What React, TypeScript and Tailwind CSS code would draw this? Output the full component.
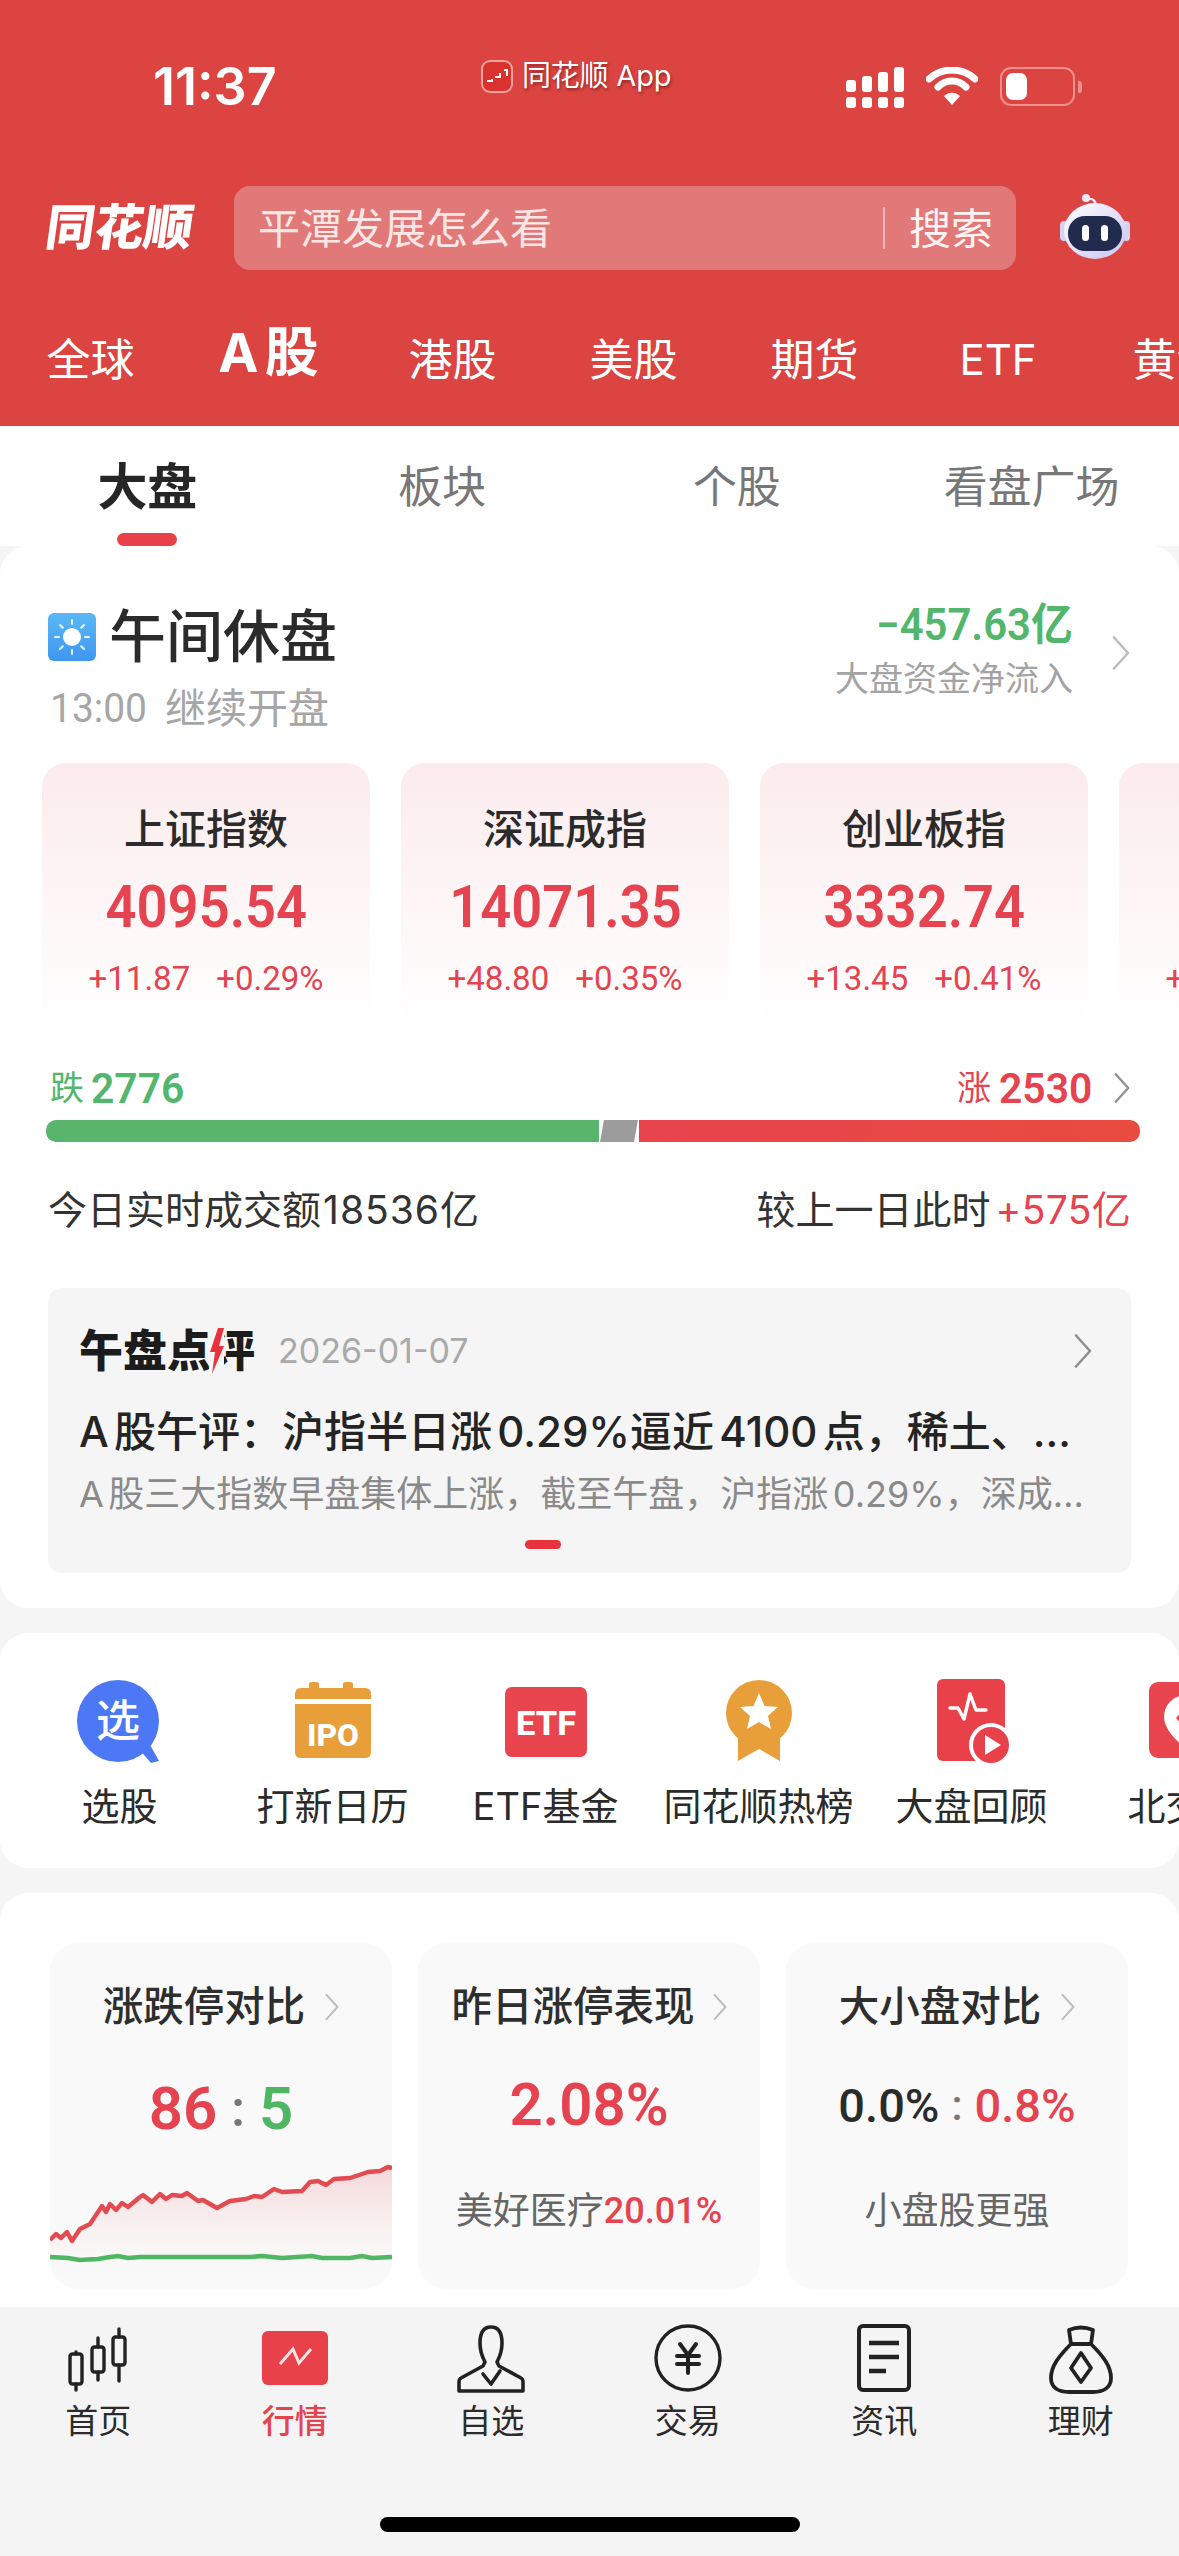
import React from "react";

function Chevron({ className = "", color = "#BDBDBD" }: { className?: string; color?: string }) {
  return (
    <svg viewBox="0 0 18 34" className={className} fill="none">
      <path d="M2 1.5 L16 17 L2 32.5" stroke={color} strokeWidth="2.6" strokeLinejoin="round" strokeLinecap="round" />
    </svg>
  );
}

function Signal() {
  const h = [12, 16, 20, 25];
  return (
    <svg width="60" height="42" viewBox="0 0 60 42" fill="#fff">
      {h.map((v, i) => (
        <g key={i}>
          <rect x={i * 16} y={25 - v} width="10" height={v} rx="3" />
          <rect x={i * 16} y="30" width="10" height="11" rx="3" />
        </g>
      ))}
    </svg>
  );
}

function Wifi() {
  return (
    <svg width="52" height="40" viewBox="0 0 52 40" fill="none">
      <path d="M3 11 C16 -1 36 -1 49 11" stroke="#fff" strokeWidth="7" strokeLinecap="round" transform="translate(0 1)" />
      <path d="M12 20 C20 12 32 12 40 20" stroke="#fff" strokeWidth="7" strokeLinecap="round" />
      <path d="M18 29 C23 24.5 29 24.5 34 29 L26 38 Z" fill="#fff" />
    </svg>
  );
}

function Battery() {
  return (
    <div className="flex items-center gap-[3px]">
      <div className="w-[75px] h-[39px] rounded-[11px] border-[2.5px] border-[#F08F8C] p-[4px]">
        <div className="w-[21px] h-full rounded-[7px] bg-white" />
      </div>
      <div className="w-[4px] h-[12px] rounded-r-[3px] bg-[#F08F8C]" />
    </div>
  );
}

function Robot() {
  return (
    <svg width="72" height="66" viewBox="0 0 72 66">
      <defs>
        <linearGradient id="rb" x1="0" y1="0" x2="1" y2="1">
          <stop offset="0" stopColor="#FFFFFF" />
          <stop offset="1" stopColor="#C9C3F2" />
        </linearGradient>
      </defs>
      <circle cx="27" cy="5" r="4" fill="#EDE9FA" />
      <path d="M29 6 C35 5 37 9 37 14" stroke="#EDE9FA" strokeWidth="2.4" fill="none" />
      <rect x="1" y="28" width="8" height="20" rx="4" fill="#D6D2F2" />
      <rect x="63" y="28" width="8" height="20" rx="4" fill="#D6D2F2" />
      <ellipse cx="36" cy="38" rx="31" ry="28" fill="url(#rb)" />
      <rect x="9" y="23" width="54" height="35" rx="17" fill="#202B4D" />
      <rect x="23" y="32" width="7" height="16" rx="3.5" fill="#fff" />
      <rect x="42" y="32" width="7" height="16" rx="3.5" fill="#fff" />
    </svg>
  );
}

function Sun() {
  const rays = [0, 45, 90, 135, 180, 225, 270, 315];
  return (
    <svg width="48" height="48" viewBox="0 0 48 48">
      <defs>
        <linearGradient id="sky" x1="0" y1="0" x2="0" y2="1">
          <stop offset="0" stopColor="#5BB8F5" />
          <stop offset="1" stopColor="#3F96F0" />
        </linearGradient>
      </defs>
      <rect width="48" height="48" rx="6" fill="url(#sky)" />
      <circle cx="24" cy="24" r="9" fill="#fff" />
      {rays.map((r) => (
        <rect key={r} x="23" y="6" width="2" height="6" rx="1" fill="#E6F4FF" transform={`rotate(${r} 24 24)`} />
      ))}
    </svg>
  );
}

function IconXuan() {
  return (
    <svg width="90" height="90" viewBox="0 0 90 90">
      <path d="M64 72 L76 86 L84 84 L74 66 Z" fill="#4D78F5" />
      <circle cx="43" cy="44" r="41" fill="#4D78F5" />
      <text x="43" y="60" textAnchor="middle" fontSize="44" fontWeight="500" fill="#fff" fontFamily="Noto Sans CJK SC">选</text>
    </svg>
  );
}

function IconIpo() {
  return (
    <svg width="90" height="90" viewBox="0 0 90 90">
      <path d="M7 17 Q7 11 13 11 H21 V7 Q21 5 24 5 H28 Q31 5 31 7 V11 H55 V7 Q55 5 58 5 H62 Q65 5 65 7 V11 H77 Q83 11 83 17 V22 H7 Z" fill="#E89F3A" />
      <path d="M7 27 H83 V75 Q83 81 77 81 H13 Q7 81 7 75 Z" fill="#E89F3A" />
      <text x="45" y="69" textAnchor="middle" fontSize="32" fontWeight="800" fill="#fff" fontFamily="Roboto" textLength="52" lengthAdjust="spacingAndGlyphs">IPO</text>
    </svg>
  );
}

function IconEtf() {
  return (
    <svg width="90" height="90" viewBox="0 0 90 90">
      <rect x="4" y="10" width="82" height="70" rx="7" fill="#E8454F" />
      <text x="45" y="58" textAnchor="middle" fontSize="33" fontWeight="800" fill="#fff" fontFamily="Roboto" textLength="60" lengthAdjust="spacingAndGlyphs">ETF</text>
    </svg>
  );
}

function IconMedal() {
  return (
    <svg width="90" height="90" viewBox="0 0 90 90">
      <path d="M24 52 V84 L45 72 L66 84 V52 Z" fill="#E89F3A" />
      <circle cx="45" cy="36" r="33" fill="#E89F3A" />
      <path d="M45 16 L50.5 29 L64 30 L54 39 L57 52 L45 45 L33 52 L36 39 L26 30 L39.5 29 Z" fill="#fff" />
    </svg>
  );
}

function IconReview() {
  return (
    <svg width="90" height="90" viewBox="0 0 90 90">
      <rect x="10" y="2" width="68" height="82" rx="6" fill="#E8414A" />
      <path d="M23 31 H31 L37 42 L43 17 L49 33 H59" fill="none" stroke="#fff" strokeWidth="3.4" strokeLinejoin="round" strokeLinecap="round" />
      <circle cx="64" cy="68" r="22" fill="#fff" />
      <circle cx="64" cy="68" r="18" fill="#E8414A" />
      <path d="M58 58 L74 68 L58 78 Z" fill="#fff" />
    </svg>
  );
}

function IconBei() {
  return (
    <svg width="90" height="90" viewBox="0 0 90 90">
      <rect x="9" y="5" width="76" height="76" rx="9" fill="#E8454F" />
      <path d="M47 18 C61 18 70 28 70 40 C70 52 57 65 47 72 C37 65 24 52 24 40 C24 28 33 18 47 18 Z" fill="#fff" />
      <path d="M47 28 L58 41 L47 54 L36 41 Z" fill="#E8454F" />
    </svg>
  );
}

const navStroke = "#222222";

function NavHome() {
  return (
    <svg width="72" height="72" viewBox="0 0 72 72" fill="none" stroke={navStroke} strokeWidth="3.4">
      <path d="M14 30 V32 M14 62 V68 M36 16 V25 M36 50 V58 M57 7 V15 M57 43 V59" strokeLinecap="round" />
      <rect x="8" y="32" width="12" height="30" rx="2.5" />
      <rect x="30" y="25" width="12" height="25" rx="2.5" />
      <rect x="51" y="15" width="12" height="28" rx="2.5" />
    </svg>
  );
}

function NavMarket() {
  return (
    <svg width="72" height="72" viewBox="0 0 72 72">
      <rect x="3" y="9" width="66" height="54" rx="6" fill="#E8414A" />
      <path d="M21 42 L34 27 L40 41 L52 27" fill="none" stroke="#FBE3E4" strokeWidth="3" />
    </svg>
  );
}

function NavStock() {
  return (
    <svg width="72" height="72" viewBox="0 0 72 72" fill="none" stroke={navStroke} strokeWidth="3.6" strokeLinejoin="round">
      <path d="M36 5 C28 5 25 12 25 21 C25 31 28 36 30 40 L28 44 L6 56 Q4 57 4 60 V69 H68 V60 Q68 57 66 56 L44 44 L42 40 C44 36 47 31 47 21 C47 12 44 5 36 5 Z" />
      <path d="M28 52 L36 62 L45 49" strokeLinecap="round" />
    </svg>
  );
}

function NavTrade() {
  return (
    <svg width="72" height="72" viewBox="0 0 72 72" fill="none" stroke={navStroke} strokeWidth="3.4">
      <circle cx="36" cy="36" r="32" />
      <path d="M28 22 L36 33 L44 22 M25 34 H47 M25 42 H47 M36 33 V51" strokeLinecap="round" strokeWidth="4" />
    </svg>
  );
}

function NavNews() {
  return (
    <svg width="72" height="72" viewBox="0 0 72 72" fill="none" stroke={navStroke}>
      <rect x="11" y="4" width="50" height="64" rx="4" strokeWidth="4" />
      <path d="M21 21 H51 M21 35 H51 M21 49 H38" strokeWidth="4.4" />
    </svg>
  );
}

function NavMoney() {
  return (
    <svg width="72" height="72" viewBox="0 0 72 72" fill="none" stroke={navStroke} strokeWidth="3.8" strokeLinejoin="round">
      <path d="M24 8 Q36 3 48 8 L46 22 H26 Z" />
      <path d="M26 22 C14 34 6 44 6 56 C6 66 14 70 24 70 H48 C58 70 66 66 66 56 C66 44 58 34 46 22" />
      <path d="M36 31 L46 46 L36 60 L26 46 Z" />
    </svg>
  );
}

function Trend() {
  const raw: [number, number][] = [
    [0, 64], [6, 58], [11, 62], [17, 56], [22, 65], [30, 53], [40, 48], [52, 30], [56, 36], [60, 28], [66, 34], [72, 27], [78, 31], [90, 21], [93, 19], [102, 26], [110, 18], [116, 23], [122, 19], [132, 20], [137, 17], [148, 25], [153, 24], [160, 28], [167, 32], [180, 25], [196, 23], [204, 20], [212, 21], [224, 13], [232, 16], [252, 15], [260, 6], [268, 5], [276, 9], [284, 3], [300, 2], [318, -4], [330, -5], [338, -9], [342, -8],
  ];
  const line = raw.map(([x, y]) => `${x},${y + 12}`).join(" ");
  const green: [number, number][] = [[0, 93], [18, 94], [30, 96], [48, 95], [60, 93], [68, 92], [78, 94], [90, 93], [200, 93], [212, 92], [232, 94], [262, 92], [272, 94], [300, 94], [312, 92], [322, 94], [342, 93]];
  return (
    <svg width="342" height="125" viewBox="0 0 342 125" fill="none">
      <defs>
        <linearGradient id="tr" x1="0" y1="0" x2="0" y2="1">
          <stop offset="0" stopColor="#F5D6D8" />
          <stop offset="1" stopColor="#F9F9F9" stopOpacity="0" />
        </linearGradient>
      </defs>
      <polygon points={`0,125 ${line} 342,125`} fill="url(#tr)" />
      <polyline points={line} stroke="#E24B50" strokeWidth="4.4" strokeLinejoin="round" />
      <polyline points={green.map(([x, y]) => `${x},${y}`).join(" ")} stroke="#4FB663" strokeWidth="4.6" />
    </svg>
  );
}

const indices = [
  { n: "上证指数", v: "4095.54", a: "+11.87", p: "+0.29%" },
  { n: "深证成指", v: "14071.35", a: "+48.80", p: "+0.35%" },
  { n: "创业板指", v: "3332.74", a: "+13.45", p: "+0.41%" },
  { n: "科创50", v: "1424.31", a: "+12.30", p: "+0.87%" },
];

const shortcuts: [string, React.ReactNode][] = [
  ["选股", <IconXuan />],
  ["打新日历", <IconIpo />],
  ["ETF基金", <IconEtf />],
  ["同花顺热榜", <IconMedal />],
  ["大盘回顾", <IconReview />],
  ["北交所", <IconBei />],
];

const nav: [string, React.ReactNode, boolean][] = [
  ["首页", <NavHome />, false],
  ["行情", <NavMarket />, true],
  ["自选", <NavStock />, false],
  ["交易", <NavTrade />, false],
  ["资讯", <NavNews />, false],
  ["理财", <NavMoney />, false],
];

export default function App() {
  return (
    <div className="w-[1179px] h-[2556px] overflow-hidden flex flex-col bg-[#F5F5F5] font-['Inter','Noto_Sans_CJK_SC',sans-serif] text-[#2B2B2B]">
      {/* Red header */}
      <header className="h-[426px] shrink-0 bg-[#DC4441] text-white flex flex-col overflow-hidden">
        <div className="h-[186px] shrink-0 flex items-start">
          <div className="ml-[153px] w-[328px] mt-[56px] text-[52px] leading-[62px] font-semibold">11:37</div>
          <div className="w-[365px] mt-[57px] flex items-center gap-[9px]">
            <svg width="32" height="33" viewBox="0 0 32 33">
              <rect x="1" y="1" width="30" height="31" rx="8" fill="#D9322F" stroke="#F2A19E" strokeWidth="2" />
              <path d="M6 21 H10 M11 19 V22 M14 17 H18 M19 13 V18 M23 10 H26 V16" stroke="#fff" strokeWidth="2" fill="none" />
            </svg>
            <span className="text-[29px] leading-[38px] tracking-[-0.2px] [text-shadow:1px_2px_3px_rgba(90,20,20,0.6)]">同花顺 App</span>
          </div>
          <div className="mt-[67px] flex items-start">
            <Signal />
            <div className="ml-[20px]"><Wifi /></div>
            <div className="ml-[22px]"><Battery /></div>
          </div>
        </div>
        <div className="h-[84px] shrink-0 flex items-center">
          <div className="ml-[42px] w-[192px] text-[49px] leading-[60px] font-black -skew-x-[8deg] origin-bottom-left whitespace-nowrap">同花顺</div>
          <div className="w-[782px] h-[84px] rounded-[16px] bg-[#E27979] flex items-center pl-[24px]">
            <span className="w-[625px] pt-[2px] text-[42px] leading-[52px] text-[#FBE6E6]">平潭发展怎么看</span>
            <span className="w-[2px] h-[42px] bg-[#F0B5B5]" />
            <span className="ml-[24px] pt-[2px] text-[42px] leading-[52px] text-[#FFF4F4]">搜索</span>
          </div>
          <div className="ml-[43px] mb-[4px]"><Robot /></div>
        </div>
        <div className="mt-[60px] flex items-center h-[60px]">
          {["全球", "A股", "港股", "美股", "期货", "ETF", "黄金"].map((t) => (
            <div
              key={t}
              className={
                t === "A股"
                  ? "w-[181px] shrink-0 text-center text-[54px] leading-[60px] font-bold pb-[14px] tracking-[6px]"
                  : t === "ETF"
                    ? "w-[181px] shrink-0 text-center text-[42px] leading-[56px] pl-[5px]"
                    : "w-[181px] shrink-0 text-center text-[44px] leading-[56px]"
              }
            >
              {t}
            </div>
          ))}
        </div>
      </header>

      {/* Sub tabs */}
      <nav className="h-[120px] shrink-0 bg-white grid grid-cols-4">
        {["大盘", "板块", "个股", "看盘广场"].map((t, i) => (
          <div key={t} className="flex flex-col items-center pt-[32px]">
            <span className={i === 0 ? "text-[50px] leading-[58px] font-bold text-[#262626]" : "text-[44px] leading-[58px] text-[#777777]"}>{t}</span>
            {i === 0 && <span className="mt-[17px] w-[60px] h-[13px] rounded-full bg-[#E8414A]" />}
          </div>
        ))}
      </nav>

      {/* Market card */}
      <section className="shrink-0 bg-white rounded-[28px] pb-[35px]">
        <div className="flex pt-[54px] pl-[48px] items-start">
          <div className="w-[787px]">
            <div className="pt-[7px] flex items-center h-[67px]">
              <Sun />
              <span className="ml-[13px] text-[57px] leading-[60px] font-medium">午间休盘</span>
            </div>
            <div className="mt-[17px] pl-[2px] flex items-center h-[48px] text-[#A6A6A6] text-[41px] leading-[48px]">
              <span className="inline-block w-[115px] scale-x-95 origin-left font-['Roboto','Noto_Sans_CJK_SC',sans-serif]">13:00</span>
              <span>继续开盘</span>
            </div>
          </div>
          <div className="w-[238px] flex flex-col items-end">
            <span className="inline-block mt-[1px] scale-x-95 origin-right text-[44px] leading-[48px] font-semibold text-[#52B76D] font-['Roboto','Noto_Sans_CJK_SC',sans-serif] whitespace-nowrap">−457.63亿</span>
            <span className="mt-[8px] text-[34px] leading-[44px] text-[#A3A3A3] whitespace-nowrap">大盘资金净流入</span>
          </div>
          <Chevron className="ml-[39px] mt-[36px] w-[18px] h-[34px]" />
        </div>

        <div className="mt-[31px] flex gap-[31px] pl-[42px] overflow-hidden">
          {indices.map((c) => (
            <div key={c.n} className="w-[328px] h-[265px] shrink-0 rounded-[24px] bg-gradient-to-b from-[#FBEBED] to-[#FFFFFF] flex flex-col items-center">
              <span className="mt-[42px] text-[41px] leading-[48px] font-medium text-[#2B2B2B]">{c.n}</span>
              <span className="inline-block mt-[22px] scale-x-[0.905] text-[60px] leading-[64px] font-semibold text-[#E5434F] font-['Roboto',sans-serif] whitespace-nowrap">{c.v}</span>
              <div className="mt-[18px] flex gap-[26px] text-[33px] leading-[44px] text-[#E5434F] font-['Roboto',sans-serif]">
                <span>{c.a}</span>
                <span>{c.p}</span>
              </div>
            </div>
          ))}
        </div>

        <div className="mt-[38px] h-[44px] flex items-center pl-[50px] pr-[49px]">
          <span className="text-[34px] leading-[44px] text-[#52B76D]">跌</span>
          <span className="inline-block ml-[7px] w-[96px] scale-x-95 origin-left text-[43px] leading-[44px] font-semibold text-[#52B76D] font-['Roboto',sans-serif]">2776</span>
          <span className="ml-auto text-[34px] leading-[44px] text-[#E5434F]">涨</span>
          <span className="inline-block ml-[8px] w-[93px] scale-x-95 origin-left text-[43px] leading-[44px] font-semibold text-[#E5434F] font-['Roboto',sans-serif]">2530</span>
          <Chevron className="ml-[22px] w-[16px] h-[32px]" color="#8F8F8F" />
        </div>

        <div className="mt-[10px] ml-[46px] w-[1094px] h-[22px] flex">
          <div className="w-[553px] h-full rounded-l-[10px] bg-[#58B56B]" />
          <div className="ml-[3px] w-[34px] h-full bg-[#9C9C9C] -skew-x-[10deg]" />
          <div className="ml-[3px] flex-1 h-full rounded-r-[10px] bg-gradient-to-r from-[#E8444F] to-[#E84B3F]" />
        </div>

        <div className="mt-[44px] h-[48px] flex items-center justify-between pl-[48px] pr-[48px] text-[39px] leading-[48px] text-[#333333] whitespace-nowrap">
          <span>今日实时成交额<span className="ml-[2px] tracking-[1px]">18536亿</span></span>
          <span>较上一日此时<span className="ml-[5px] tracking-[0.3px] text-[#E5434F]">+575亿</span></span>
        </div>

        <div className="mt-[54px] mx-[48px] h-[285px] rounded-[14px] bg-[#F5F5F5] flex flex-col pl-[31px] pr-[38px] overflow-hidden">
          <div className="mt-[36px] h-[54px] flex items-center">
            <div className="relative w-[176px] text-[44px] leading-[54px] font-black text-[#1C1C1C] whitespace-nowrap">
              午盘点评
              <svg className="absolute left-[130px] top-[4px]" width="17" height="46" viewBox="0 0 17 46">
                <rect x="0" y="0" width="15" height="46" fill="#F5F5F5" />
                <path d="M9 0 H15 L10 18 H15 L3 46 L6 24 H1 Z" fill="#E8333C" />
              </svg>
            </div>
            <span className="ml-[23px] text-[34px] leading-[44px] text-[#A9A9A9]">2026-01-07</span>
            <Chevron className="ml-auto w-[20px] h-[34px]" color="#8F8F8F" />
          </div>
          <div className="mt-[26px] h-[56px] text-[42px] leading-[56px] font-medium text-[#242424] whitespace-nowrap [text-autospace:normal]">A股午评：沪指半日涨0.29%逼近4100点，稀土、…</div>
          <div className="mt-[10px] h-[48px] text-[36px] leading-[48px] text-[#8A8A8A] whitespace-nowrap [text-autospace:normal]">A股三大指数早盘集体上涨，截至午盘，沪指涨0.29%，深成…</div>
          <div className="mt-[22px] ml-[446px] w-[36px] h-[9px] rounded-full bg-[#E8333C]" />
        </div>
      </section>

      {/* Shortcuts */}
      <section className="mt-[25px] h-[235px] shrink-0 bg-white rounded-[28px] flex pl-[13px] overflow-hidden pt-[44px]">
        {shortcuts.map(([label, icon]) => (
          <div key={label} className="w-[213px] shrink-0 flex flex-col items-center">
            <div className="h-[90px]">{icon}</div>
            <span className="mt-[15px] text-[38px] leading-[48px] text-[#2B2B2B] whitespace-nowrap">{label}</span>
          </div>
        ))}
      </section>

      {/* Stats */}
      <section className="mt-[25px] flex-1 min-h-0 bg-white rounded-t-[28px] pt-[50px] pl-[50px] pr-[51px] flex gap-[26px]">
        <div className="w-[342px] h-[346px] shrink-0 rounded-[28px] bg-[#F9F9F9] flex flex-col items-center overflow-hidden">
          <div className="mt-[40px] h-[48px] flex items-center">
            <span className="text-[40.5px] leading-[48px] font-medium text-[#2E2E2E]">涨跌停对比</span>
            <Chevron className="ml-[20px] w-[14px] h-[28px]" />
          </div>
          <div className="mt-[42px] h-[72px] flex items-center text-[60px] leading-[72px] font-semibold font-['Roboto',sans-serif]">
            <span className="text-[#E5434F]">86</span>
            <span className="mx-[14px] text-[#777777] text-[50px]">:</span>
            <span className="text-[#4FB663]">5</span>
          </div>
          <div className="mt-auto"><Trend /></div>
        </div>

        <div className="w-[342px] h-[346px] shrink-0 rounded-[28px] bg-[#F9F9F9] flex flex-col items-center">
          <div className="mt-[40px] h-[48px] flex items-center">
            <span className="text-[40.5px] leading-[48px] font-medium text-[#2E2E2E]">昨日涨停表现</span>
            <Chevron className="ml-[18px] w-[14px] h-[28px]" />
          </div>
          <span className="inline-block mt-[38px] h-[72px] scale-x-[0.97] text-[60px] leading-[72px] font-semibold text-[#E5434F] font-['Roboto',sans-serif]">2.08%</span>
          <div className="mt-[46px] h-[48px] flex items-center whitespace-nowrap text-[37px] leading-[48px] text-[#666666]">
            美好医疗<span className="text-[#E5434F] text-[36px] font-['Roboto',sans-serif] font-medium">20.01%</span>
          </div>
        </div>

        <div className="w-[342px] h-[346px] shrink-0 rounded-[28px] bg-[#F9F9F9] flex flex-col items-center">
          <div className="mt-[40px] h-[48px] flex items-center">
            <span className="text-[40.5px] leading-[48px] font-medium text-[#2E2E2E]">大小盘对比</span>
            <Chevron className="ml-[20px] w-[14px] h-[28px]" />
          </div>
          <div className="mt-[39px] h-[72px] flex items-center text-[47px] leading-[72px] font-medium font-['Roboto',sans-serif] whitespace-nowrap">
            <span className="text-[#2B2B2B]">0.0%</span>
            <span className="mx-[12px] text-[#777777] text-[42px]">:</span>
            <span className="text-[#E5434F]">0.8%</span>
          </div>
          <span className="mt-[45px] h-[48px] text-[37px] leading-[48px] text-[#666666]">小盘股更强</span>
        </div>
      </section>

      {/* Bottom nav */}
      <footer className="h-[249px] shrink-0 bg-[#F4F4F4] flex flex-col">
        <div className="grid grid-cols-6 pt-[15px]">
          {nav.map(([label, icon, active]) => (
            <div key={label} className="flex flex-col items-center">
              <div className="h-[72px]">{icon}</div>
              <span className={`mt-[7px] text-[33px] leading-[40px] ${active ? "text-[#E5434F] font-medium" : "text-[#2B2B2B]"}`}>{label}</span>
            </div>
          ))}
        </div>
        <div className="mt-[76px] mx-auto w-[420px] h-[15px] rounded-full bg-black" />
      </footer>
    </div>
  );
}
